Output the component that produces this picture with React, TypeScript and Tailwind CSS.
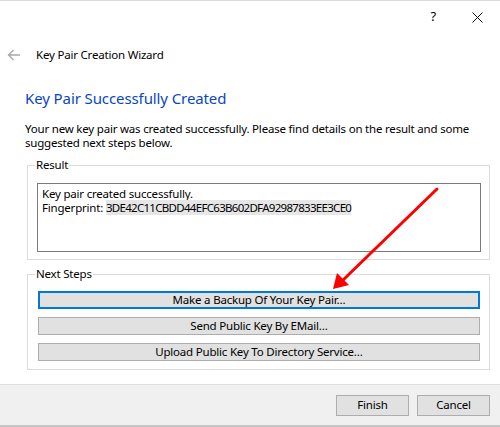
import React from "react";

const font = { fontFamily: '"Noto Sans", "Open Sans", sans-serif', letterSpacing: "-0.2px" };

function Btn({ children, focus }: { children: React.ReactNode; focus?: boolean }) {
  return (
    <div
      className={
        "h-[18px] flex items-center justify-center bg-[#e1e1e1] text-[11.5px] leading-none text-black " +
        (focus ? "border-2 border-[#0078d7]" : "border border-[#adadad]")
      }
    >
      {children}
    </div>
  );
}

export default function App() {
  return (
    <div
      className="relative w-[500px] h-[427px] bg-white border-t border-[#dadada] flex flex-col text-black overflow-hidden"
      style={font}
    >
      {/* title bar */}
      <div className="h-[31px] flex items-center justify-end pr-[17px]">
        <span className="text-[13px] leading-none mr-[36px]">?</span>
        <svg width="11" height="11" viewBox="0 0 11 11" className="mt-[1px]">
          <path d="M0.5 0.5 L10.5 10.5 M10.5 0.5 L0.5 10.5" stroke="#111" strokeWidth="1" />
        </svg>
      </div>
      {/* header */}
      <div className="h-[46px] flex items-center">
        <svg width="14" height="12" viewBox="0 0 14 12" className="ml-[7px]">
          <path d="M13 6 H1.5 M6.5 1 L1.5 6 L6.5 11" stroke="#a8a8a8" strokeWidth="1.3" fill="none" />
        </svg>
        <span className="ml-[15px] text-[11.5px] leading-none">Key Pair Creation Wizard</span>
      </div>
      {/* content */}
      <div className="flex-1 flex flex-col pl-[25px] pr-[10px]">
        <div className="mt-[10px] text-[15px] leading-[20px] tracking-[-0.1px] text-[#0a46c4]">
          Key Pair Successfully Created
        </div>
        <div className="mt-[14px] text-[11.5px] leading-[14px] pr-[20px]">
          Your new key pair was created successfully. Please find details on the result and some suggested next
          steps below.
        </div>
        {/* Result group */}
        <div className="mt-[15px] ml-[2px] relative border border-[#dcdcdc] h-[95px] pt-[17px] pl-[9px] pr-[8px]">
          <span className="absolute -top-[9px] left-[7px] bg-white px-[1px] text-[11.5px] leading-[16px]">Result</span>
          <div className="h-[69px] border border-[#7a7a7a] px-[4px] pt-[3px] text-[11.5px] leading-[14px]">
            <div>Key pair created successfully.</div>
            <div>
              Fingerprint:{" "}
              <span className="bg-[#e6e6e6] tracking-[-0.7px]">3DE42C11CBDD44EFC63B602DFA92987833EE3CE0</span>
            </div>
          </div>
        </div>
        {/* Next steps group */}
        <div className="mt-[14px] ml-[2px] relative border border-[#dcdcdc] h-[96px] pt-[16px] pl-[10px] pr-[9px] flex flex-col gap-[8px]">
          <span className="absolute -top-[9px] left-[7px] bg-white px-[1px] text-[11.5px] leading-[16px]">
            Next Steps
          </span>
          <Btn focus>Make a Backup Of Your Key Pair…</Btn>
          <Btn>Send Public Key By EMail…</Btn>
          <Btn>Upload Public Key To Directory Service…</Btn>
        </div>
      </div>
      {/* footer */}
      <div className="h-[43px] border-t border-[#dfdfdf] border-b-2 border-b-[#c6c6c6] bg-[#f0f0f0] flex items-center justify-end gap-[8px] pr-[10px]">
        <div className="w-[73px] h-[21px] border border-[#adadad] bg-[#e1e1e1] flex items-center justify-center text-[11.5px] leading-none">
          Finish
        </div>
        <div className="w-[73px] h-[21px] border border-[#adadad] bg-[#e1e1e1] flex items-center justify-center text-[11.5px] leading-none">
          Cancel
        </div>
      </div>
      {/* red arrow annotation */}
      <svg className="absolute left-0 top-0 pointer-events-none" width="500" height="427" viewBox="0 0 500 427">
        <line x1="437" y1="188" x2="342" y2="280" stroke="#ff0000" strokeWidth="3" strokeLinecap="round" />
        <path d="M333 288 L337 272 L349 284 Z" fill="#ff0000" />
      </svg>
    </div>
  );
}
